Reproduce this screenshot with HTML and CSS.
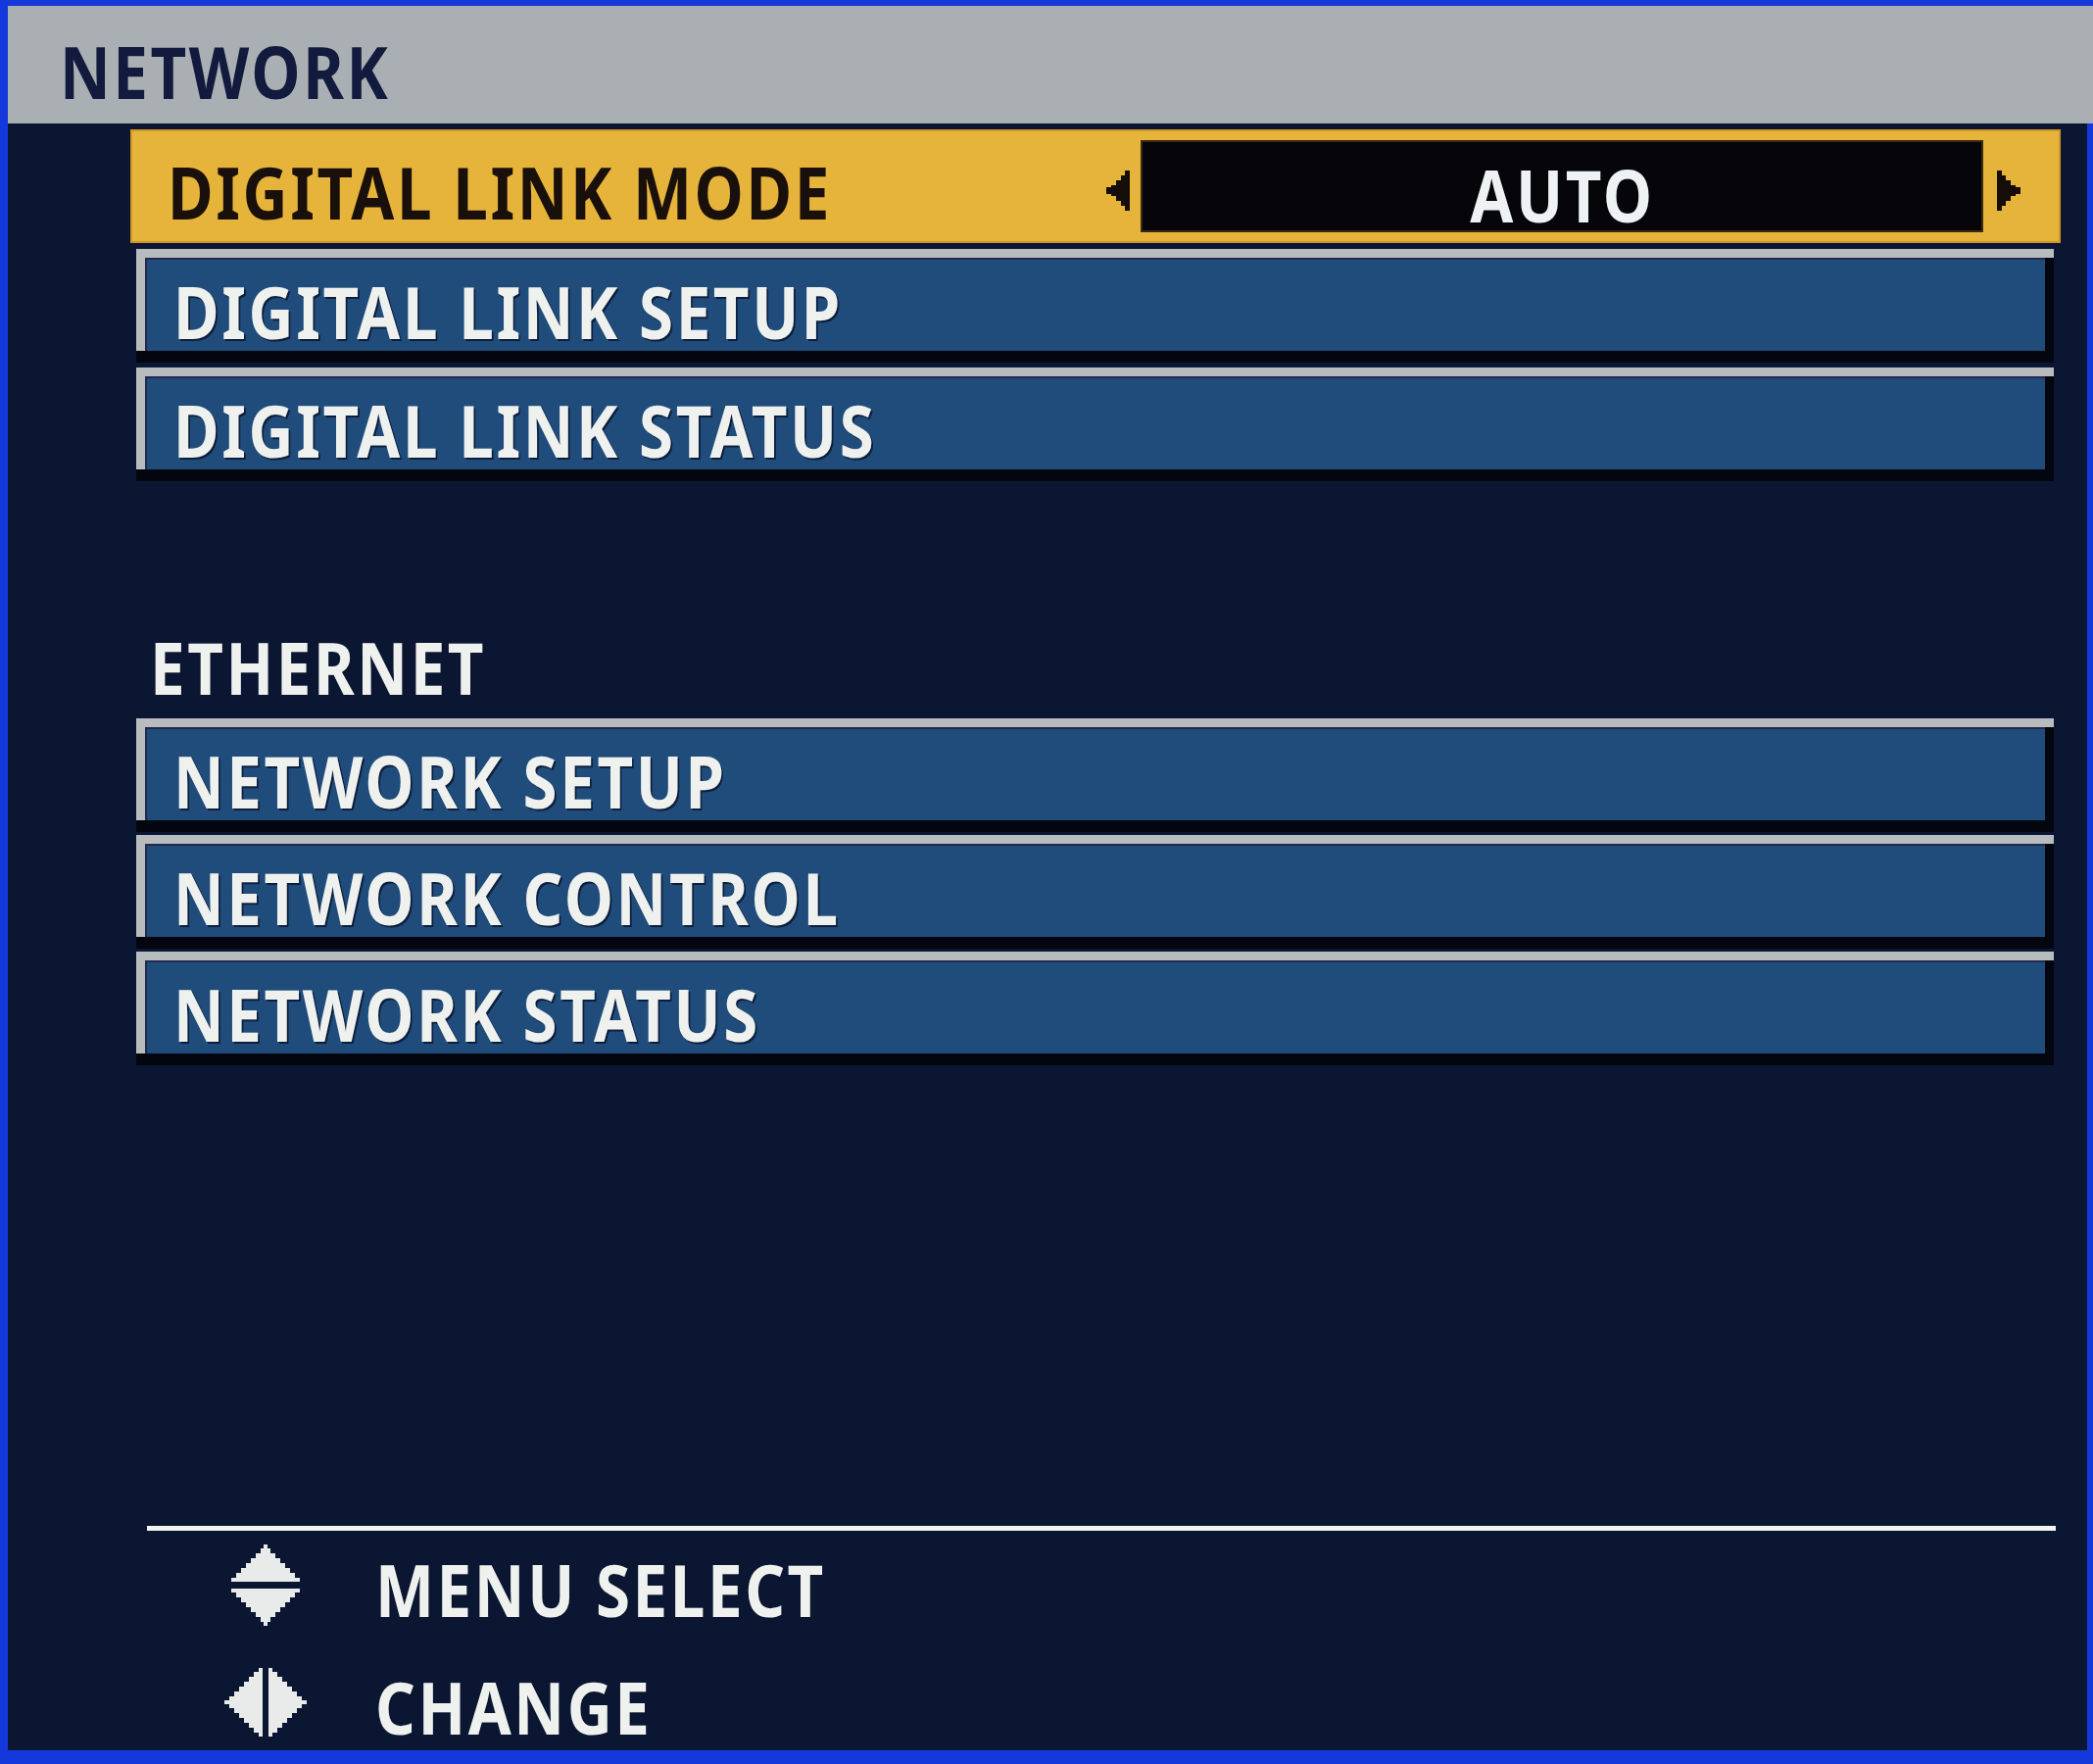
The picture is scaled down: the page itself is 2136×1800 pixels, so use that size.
FILE: index.html
```html
<!DOCTYPE html>
<html lang="en">
<head>
<meta charset="utf-8">
<title>NETWORK</title>
<link rel="stylesheet" href="styles.css">
</head>
<body>
<div class="screen">
  <header class="title-bar">
    <h1 class="title"><span class="txt">NETWORK</span></h1>
  </header>

  <main class="menu">
    <div class="option">
      <span class="option-label"><span class="txt">DIGITAL LINK MODE</span></span>
      <div class="value">
        <svg class="arrow" viewBox="0 0 24 41" aria-hidden="true">
          <path d="M24 0V41H19V36H15V31H10V26H5V24H0V17H5V15H10V10H15V5H19V0Z"/>
        </svg>
        <div class="value-box"><span class="txt txt-center">AUTO</span></div>
        <svg class="arrow" viewBox="0 0 24 41" aria-hidden="true">
          <path d="M0 0V41H5V36H9V31H14V26H19V24H24V17H19V15H14V10H9V5H5V0Z"/>
        </svg>
      </div>
    </div>

    <div class="item"><div class="item-body"><span class="txt">DIGITAL LINK SETUP</span></div></div>
    <div class="item item-gap"><div class="item-body"><span class="txt">DIGITAL LINK STATUS</span></div></div>

    <div class="section-label"><span class="txt">ETHERNET</span></div>

    <div class="item item-follow"><div class="item-body"><span class="txt">NETWORK SETUP</span></div></div>
    <div class="item item-follow"><div class="item-body"><span class="txt">NETWORK CONTROL</span></div></div>
    <div class="item item-follow"><div class="item-body"><span class="txt">NETWORK STATUS</span></div></div>
  </main>

  <footer class="guide">
    <div class="guide-line"></div>
    <div class="guide-row guide-row-first">
      <div class="icon-cell">
        <svg class="icon-updown" viewBox="0 0 70 83" aria-hidden="true">
          <path d="M0 38V34H5V29H10V24H15V19H20V14H25V9H30V4H33V0H37V4H40V9H45V14H50V19H55V24H60V29H65V34H70V38Z"/>
          <path d="M0 45V49H5V54H10V59H15V64H20V69H25V74H30V79H33V83H37V79H40V74H45V69H50V64H55V59H60V54H65V49H70V45Z"/>
        </svg>
      </div>
      <span class="guide-text"><span class="txt">MENU SELECT</span></span>
    </div>
    <div class="guide-row guide-row-second">
      <div class="icon-cell">
        <svg class="icon-leftright" viewBox="0 0 84 70" aria-hidden="true">
          <path d="M39 0V70H35V66H30V61H25V56H20V51H15V46H10V41H5V37H0V33H5V29H10V24H15V19H20V14H25V9H30V4H35V0Z"/>
          <path d="M45 0V70H49V66H54V61H59V56H64V51H69V46H74V41H79V37H84V33H79V29H74V24H69V19H64V14H59V9H54V4H49V0Z"/>
        </svg>
      </div>
      <span class="guide-text"><span class="txt">CHANGE</span></span>
    </div>
  </footer>
</div>
</body>
</html>
```

FILE: styles.css
```css
* {
  box-sizing: border-box;
}

html,
body {
  margin: 0;
}

body {
  width: 2136px;
  height: 1800px;
  overflow: hidden;
  padding: 6px 6px 14px 8px;
  background: #1538dc;
  font-family: "Noto Sans", "DejaVu Sans", sans-serif;
  font-weight: 700;
}

/* the OSD font is tall and narrow: squeeze the glyphs horizontally */
.txt {
  display: inline-block;
  white-space: nowrap;
  transform: scaleX(0.86);
  transform-origin: 0 50%;
}

.txt-center {
  transform-origin: 50% 50%;
}

/* on-screen menu panel */
.screen {
  width: 2122px;
  height: 1780px;
  background: #0b1732;
  display: flex;
  flex-direction: column;
}

/* grey title strip */
.title-bar {
  height: 120px;
  margin-right: -6px;
  background: #a9afb2;
  display: flex;
  align-items: center;
  padding: 14px 0 0 53px;
}

.title {
  margin: 0;
  font-size: 74px;
  line-height: 74px;
  font-weight: 700;
  letter-spacing: 3px;
  color: #121a3e;
}

.menu {
  display: flex;
  flex-direction: column;
  padding: 0 27px 0 125px;
}

/* highlighted (selected) row */
.option {
  margin-top: 6px;
  height: 116px;
  background: #e6b43b;
  border: 2px solid #d09628;
  display: flex;
  align-items: center;
  padding: 0 39px 0 36px;
}

.option-label {
  flex: 1;
  padding-top: 12px;
  font-size: 74px;
  line-height: 74px;
  letter-spacing: 3px;
  color: #1a100b;
}

.value {
  display: flex;
  align-items: center;
}

.arrow {
  width: 24px;
  height: 41px;
  margin-top: 8px;
  fill: #140d08;
  shape-rendering: crispEdges;
}

.value-box {
  width: 860px;
  height: 94px;
  margin: 0 14px 0 11px;
  background: #05050a;
  border: 2px solid #3b2a12;
  display: flex;
  align-items: center;
  justify-content: center;
  padding-top: 18px;
  font-size: 74px;
  line-height: 74px;
  letter-spacing: 3px;
  color: #eef2f2;
}

/* bevelled sub-menu rows */
.item {
  margin: 6px 7px 0 6px;
  border-top: 9px solid #b8bcbe;
}

.item-gap {
  margin-top: 17px;
}

.item-follow {
  margin-top: 15px;
}

.item-body {
  height: 95px;
  margin-right: 9px;
  border-left: 9px solid #b8bcbe;
  background: #1f4c7a;
  box-shadow: inset 2px 2px 0 #22294c, 9px 0 0 #03060f, 0 12px 0 #03060f, 9px 12px 0 #03060f;
  display: flex;
  align-items: center;
  padding: 14px 0 0 29px;
  font-size: 74px;
  line-height: 74px;
  letter-spacing: 3px;
  color: #eef1ee;
  text-shadow: 2px 2px 0 #0d1e3c;
}

.section-label {
  margin: 165px 0 0 20px;
  font-size: 74px;
  line-height: 74px;
  letter-spacing: 3px;
  color: #eef1ee;
  text-shadow: 2px 2px 0 #0b1530;
}

/* key guide at the bottom */
.guide {
  margin: 482px 32px 0 142px;
}

.guide-line {
  height: 5px;
  background: #f4f3ee;
}

.guide-row {
  display: flex;
  align-items: center;
  margin-left: 79px;
}

.guide-row-first {
  height: 84px;
  margin-top: 13px;
}

.guide-row-second {
  height: 74px;
  margin-top: 41px;
}

.icon-cell {
  width: 84px;
  display: flex;
  justify-content: center;
}

.icon-updown {
  width: 70px;
  height: 83px;
  fill: #e9eaea;
  shape-rendering: crispEdges;
}

.icon-leftright {
  width: 84px;
  height: 70px;
  fill: #e9eaea;
  shape-rendering: crispEdges;
}

.guide-text {
  margin-left: 70px;
  padding-top: 10px;
  font-size: 74px;
  line-height: 74px;
  letter-spacing: 3px;
  color: #eef1ee;
  text-shadow: 2px 2px 0 #0b1530;
}
```
